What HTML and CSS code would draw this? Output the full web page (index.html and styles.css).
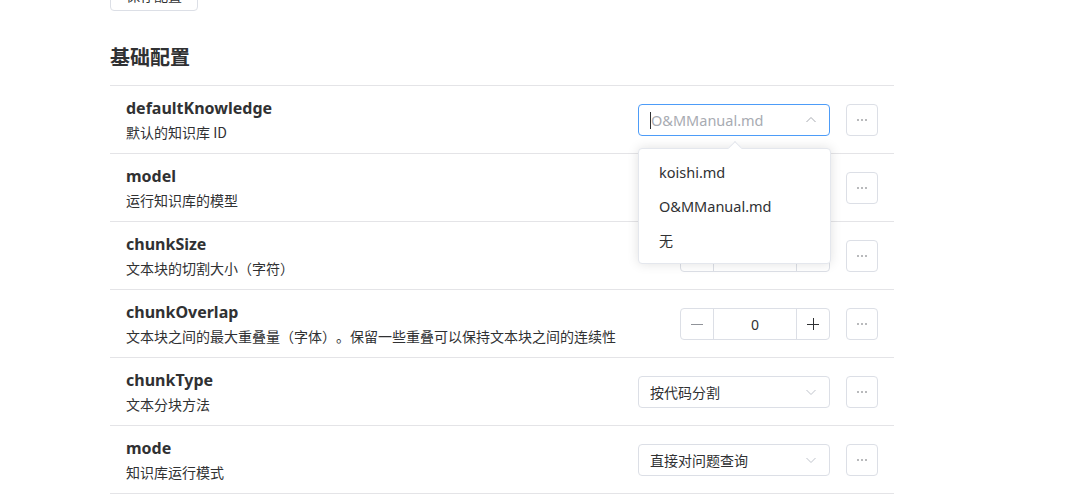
FILE: index.html
```html
<!DOCTYPE html>
<html lang="zh-CN">
<head>
<meta charset="utf-8">
<link rel="stylesheet" href="styles.css">
</head>
<body>
<div class="page">
  <button class="top-btn">保存配置</button>
  <h2 class="section-title">基础配置</h2>
  <div class="list">
    <div class="row">
      <div class="info">
        <div class="name">defaultKnowledge</div>
        <div class="desc">默认的知识库 ID</div>
      </div>
      <div class="controls">
        <div class="select focused">
          <span class="caret"></span>
          <span class="placeholder">O&amp;MManual.md</span>
          <svg class="chev" viewBox="0 0 12 12" width="12" height="12"><path d="M1.5 8 L6 3.5 L10.5 8" fill="none" stroke="#a8abb2" stroke-width="1"/></svg>
        </div>
        <button class="more"><svg viewBox="0 0 12 4" width="12" height="4"><circle cx="2" cy="2" r="0.8" fill="#606266"/><circle cx="6" cy="2" r="0.8" fill="#606266"/><circle cx="10" cy="2" r="0.8" fill="#606266"/></svg></button>
      </div>
      <div class="dropdown">
        <span class="arrow"></span>
        <div class="item">koishi.md</div>
        <div class="item">O&amp;MManual.md</div>
        <div class="item cjk">无</div>
      </div>
    </div>
    <div class="row">
      <div class="info">
        <div class="name">model</div>
        <div class="desc">运行知识库的模型</div>
      </div>
      <div class="controls">
        <div class="select"><span class="value"></span></div>
        <button class="more"><svg viewBox="0 0 12 4" width="12" height="4"><circle cx="2" cy="2" r="0.8" fill="#606266"/><circle cx="6" cy="2" r="0.8" fill="#606266"/><circle cx="10" cy="2" r="0.8" fill="#606266"/></svg></button>
      </div>
    </div>
    <div class="row">
      <div class="info">
        <div class="name">chunkSize</div>
        <div class="desc">文本块的切割大小（字符）</div>
      </div>
      <div class="controls">
        <div class="number">
          <span class="step">−</span><span class="num">500</span><span class="step">+</span>
        </div>
        <button class="more"><svg viewBox="0 0 12 4" width="12" height="4"><circle cx="2" cy="2" r="0.8" fill="#606266"/><circle cx="6" cy="2" r="0.8" fill="#606266"/><circle cx="10" cy="2" r="0.8" fill="#606266"/></svg></button>
      </div>
    </div>
    <div class="row">
      <div class="info">
        <div class="name">chunkOverlap</div>
        <div class="desc">文本块之间的最大重叠量（字体）。保留一些重叠可以保持文本块之间的连续性</div>
      </div>
      <div class="controls">
        <div class="number">
          <span class="step">
            <svg viewBox="0 0 14 14" width="14" height="14"><path d="M1 7.5 H13" stroke="#909399" stroke-width="1"/></svg>
          </span><span class="num">0</span><span class="step">
            <svg viewBox="0 0 14 14" width="14" height="14"><path d="M1 7.5 H13 M7.5 1 V13" stroke="#303133" stroke-width="1"/></svg>
          </span>
        </div>
        <button class="more"><svg viewBox="0 0 12 4" width="12" height="4"><circle cx="2" cy="2" r="0.8" fill="#606266"/><circle cx="6" cy="2" r="0.8" fill="#606266"/><circle cx="10" cy="2" r="0.8" fill="#606266"/></svg></button>
      </div>
    </div>
    <div class="row">
      <div class="info">
        <div class="name">chunkType</div>
        <div class="desc">文本分块方法</div>
      </div>
      <div class="controls">
        <div class="select">
          <span class="value">按代码分割</span>
          <svg class="chev" viewBox="0 0 12 12" width="12" height="12"><path d="M1.5 4 L6 8.5 L10.5 4" fill="none" stroke="#c0c4cc" stroke-width="1"/></svg>
        </div>
        <button class="more"><svg viewBox="0 0 12 4" width="12" height="4"><circle cx="2" cy="2" r="0.8" fill="#606266"/><circle cx="6" cy="2" r="0.8" fill="#606266"/><circle cx="10" cy="2" r="0.8" fill="#606266"/></svg></button>
      </div>
    </div>
    <div class="row">
      <div class="info">
        <div class="name">mode</div>
        <div class="desc">知识库运行模式</div>
      </div>
      <div class="controls">
        <div class="select">
          <span class="value">直接对问题查询</span>
          <svg class="chev" viewBox="0 0 12 12" width="12" height="12"><path d="M1.5 4 L6 8.5 L10.5 4" fill="none" stroke="#c0c4cc" stroke-width="1"/></svg>
        </div>
        <button class="more"><svg viewBox="0 0 12 4" width="12" height="4"><circle cx="2" cy="2" r="0.8" fill="#606266"/><circle cx="6" cy="2" r="0.8" fill="#606266"/><circle cx="10" cy="2" r="0.8" fill="#606266"/></svg></button>
      </div>
    </div>
  </div>
</div>
</body>
</html>
```
FILE: styles.css
```css
* { box-sizing: border-box; }
html, body { margin: 0; padding: 0; background: #fff; overflow: hidden; }
body {
  font-family: "Segoe UI", "Noto Sans", "Noto Sans CJK SC", sans-serif;
  color: #303133;
  width: 1066px;
  height: 502px;
  text-spacing-trim: space-all;
}
.page {
  margin-left: 110px;
  width: 784px;
  margin-top: -21px;
}
.top-btn {
  display: block;
  width: 88px;
  height: 32px;
  border: 1px solid #dcdfe6;
  border-radius: 4px;
  background: #fff;
  font-family: "Noto Sans CJK SC", sans-serif;
  font-size: 14px;
  color: #303133;
  padding: 0;
}
.section-title {
  margin: 32px 0 14px;
  font-size: 20px;
  line-height: 28px;
  font-weight: 700;
  color: #303133;
  font-family: "Noto Sans CJK SC", sans-serif;
}
.list { border-bottom: 1px solid #e4e4e7; }
.row {
  position: relative;
  height: 68px;
  border-top: 1px solid #e4e4e7;
  padding: 10px 16px 0;
  display: flex;
  justify-content: space-between;
}
.name {
  font-size: 16px;
  line-height: 24px;
  font-weight: 700;
  color: #303133;
}
.desc {
  font-size: 14px;
  line-height: 25px;
  color: #303133;
  font-family: "Noto Sans CJK SC", sans-serif;
  text-spacing-trim: space-all;
}
.controls {
  display: flex;
  align-items: center;
  gap: 16px;
  height: 48px;
  margin-top: 0;
}
.select {
  position: relative;
  width: 192px;
  height: 32px;
  border: 1px solid #dcdfe6;
  border-radius: 4px;
  display: flex;
  align-items: center;
  padding: 0 11px;
  font-size: 14px;
}
.select.focused { border-color: #4d9cf8; }
.caret {
  display: inline-block;
  width: 1px;
  height: 17px;
  background: #303133;
}
.placeholder { color: #a8abb2; font-size: 14.5px; }
.value { color: #303133; font-family: "Noto Sans CJK SC", sans-serif; font-size: 14px; }
.chev { position: absolute; right: 12px; top: 9px; }
.number {
  width: 150px;
  height: 32px;
  border: 1px solid #dcdfe6;
  border-radius: 4px;
  display: flex;
  font-size: 14px;
}
.step {
  width: 33px;
  display: flex;
  align-items: center;
  justify-content: center;
  color: #606266;
}
.step:first-child { border-right: 1px solid #dcdfe6; }
.step:last-child { border-left: 1px solid #dcdfe6; }
.num {
  flex: 1;
  display: flex;
  align-items: center;
  justify-content: center;
  color: #303133;
}
.more {
  width: 32px;
  height: 32px;
  border: 1px solid #dcdfe6;
  border-radius: 4px;
  background: #fff;
  padding: 0;
  display: flex;
  align-items: center;
  justify-content: center;
}
.dropdown {
  position: absolute;
  left: 528px;
  top: 62px;
  width: 193px;
  padding: 6px 0;
  background: #fff;
  border: 1px solid #e4e7ed;
  border-radius: 4px;
  box-shadow: 0 0 12px rgba(0, 0, 0, 0.12);
  z-index: 10;
}
.arrow {
  position: absolute;
  top: -6px;
  left: 91px;
  width: 10px;
  height: 10px;
  background: #fff;
  border-top: 1px solid #e4e7ed;
  border-left: 1px solid #e4e7ed;
  transform: rotate(45deg);
}
.item {
  height: 34px;
  line-height: 34px;
  padding: 0 20px;
  font-size: 14.5px;
  color: #303133;
}
.item.cjk { font-family: "Noto Sans CJK SC", sans-serif; font-size: 14px; }
```
